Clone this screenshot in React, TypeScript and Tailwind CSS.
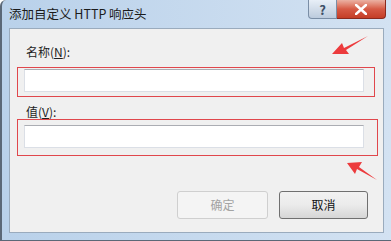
const font = { fontFamily: '"Microsoft YaHei", "Noto Sans CJK SC", "Liberation Sans", sans-serif' };

const Label = ({ label, hotkey }: { label: string; hotkey: string }) => (
  <div className="pl-[16px] text-[12px] leading-[14px] text-[#1e1e1e]">
    {label}(<span className="underline">{hotkey}</span>):
  </div>
);

const TextBox = () => (
  <div className="w-[340px] h-[23px] bg-white border border-[#dbdfe6] border-t-[#abadb3]"></div>
);

const Arrow = ({ className, d }: { className: string; d: string }) => (
  <svg className={`absolute ${className}`} width="50" height="30" viewBox="0 0 50 30">
    <path d={d} fill="#ec3b3d" />
  </svg>
);

export default function App() {
  return (
    <div className="w-[391px] h-[241px] overflow-hidden bg-white" style={font}>
      <div className="relative w-[391px] h-[241px] flex flex-col bg-gradient-to-r from-[#b9d1ea] to-[#d3e2f2] border-l-2 border-b border-[#5b6877] rounded-tl-[6px]">
        {/* title bar */}
        <div className="h-[28px] flex items-start shrink-0">
          <div className="pl-[7px] pt-[6px] text-[12.5px] leading-[16px] text-[#1b1b1b] whitespace-nowrap">
            添加自定义 HTTP 响应头
          </div>
          <div className="ml-auto mr-[5px] flex">
            <div className="w-[29px] h-[19px] rounded-bl-[4px] border border-t-0 border-[#7a8ea6] bg-gradient-to-b from-[#e8eff7] to-[#bccbdd] flex items-center justify-center text-[13px] font-bold text-[#3d4f66] leading-none">
              ?
            </div>
            <div className="w-[49px] h-[19px] rounded-br-[4px] border border-t-0 border-l-0 border-[#8a2a1e] bg-gradient-to-b from-[#eab1a3] via-[#d65a45] to-[#c43d26] flex items-center justify-center">
              <svg width="12" height="11" viewBox="0 0 12 11">
                <path d="M1 1 L11 10 M11 1 L1 10" stroke="#fff" strokeWidth="2.6" strokeLinecap="square" />
              </svg>
            </div>
          </div>
        </div>

        {/* client area */}
        <div className="ml-[7px] mr-[7px] mb-[7px] flex-1 border border-[#9aabbd] bg-[#f0f0f0] flex flex-col">
          <div className="h-[16px]"></div>
          <Label label="名称" hotkey="N" />
          <div className="ml-[7px] mt-[8px] w-[358px] bg-[#e0474c] p-px">
            <div className="bg-[#f0f0f0] pl-[6px] pt-[1px] pb-[4px]">
              <TextBox />
            </div>
          </div>
          <div className="h-[8px]"></div>
          <Label label="值" hotkey="V" />
          <div className="ml-[7px] w-[361px] bg-[#e0474c] p-px">
            <div className="bg-[#f0f0f0] pl-[6px] pt-[5px] pb-[7px]">
              <TextBox />
            </div>
          </div>
          <div className="mt-[35px] flex justify-end gap-[11px] pr-[15px]">
            <div className="w-[91px] h-[28px] rounded-[3px] border border-[#cfcfcf] bg-[#f4f4f4] flex items-center justify-center text-[12px] text-[#a3a3a3]">
              确定
            </div>
            <div className="w-[89px] h-[28px] rounded-[3px] border border-[#707070] bg-gradient-to-b from-[#f2f2f2] via-[#ebebeb] to-[#d6d6d6] flex items-center justify-center text-[12px] text-[#111]">
              取消
            </div>
          </div>
        </div>

        <Arrow className="left-[326px] top-[33px]" d="M4 21 L14 10 L16 15 L40 3 L18 17 L21 21 Z" />
        <Arrow className="left-[341px] top-[158px]" d="M4 5 L19 4 L16 9 L34 22 L14 11 L12 16 Z" />
      </div>
    </div>
  );
}
